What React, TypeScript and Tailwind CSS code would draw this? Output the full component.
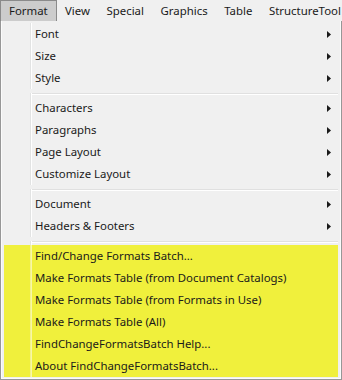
import React from 'react';

type Item = { label: string; sub?: boolean; hl?: boolean } | 'sep';

const items: Item[] = [
  { label: 'Font', sub: true },
  { label: 'Size', sub: true },
  { label: 'Style', sub: true },
  'sep',
  { label: 'Characters', sub: true },
  { label: 'Paragraphs', sub: true },
  { label: 'Page Layout', sub: true },
  { label: 'Customize Layout', sub: true },
  'sep',
  { label: 'Document', sub: true },
  { label: 'Headers & Footers', sub: true },
  'sep',
  { label: 'Find/Change Formats Batch...', hl: true },
  { label: 'Make Formats Table (from Document Catalogs)', hl: true },
  { label: 'Make Formats Table (from Formats in Use)', hl: true },
  { label: 'Make Formats Table (All)', hl: true },
  { label: 'FindChangeFormatsBatch Help...', hl: true },
  { label: 'About FindChangeFormatsBatch...', hl: true },
];

const menuBar = ['Format', 'View', 'Special', 'Graphics', 'Table', 'StructureTool'];

function Arrow() {
  return (
    <svg width="4" height="7" viewBox="0 0 4 7" className="shrink-0">
      <path d="M0 0 L4 3.5 L0 7 Z" fill="#1a1a1a" />
    </svg>
  );
}

export default function App() {
  return (
    <div
      className="w-[342px] h-[380px] overflow-hidden bg-[#f0f0f0] text-[11.4px] text-[#1a1a1a] flex flex-col"
      style={{ fontFamily: '"Segoe UI", "Noto Sans", sans-serif' }}
    >
      {/* menu bar */}
      <div className="h-[21px] flex items-stretch bg-[#f0f0f0] whitespace-nowrap shrink-0">
        {menuBar.map((m, i) => (
          <div
            key={m}
            className={
              i === 0
                ? 'px-[8px] flex items-center bg-[#cccccc] border border-[#8a8a8a] border-b-0'
                : 'px-[8.3px] flex items-center'
            }
          >
            {m}
          </div>
        ))}
      </div>

      {/* dropdown */}
      <div className="flex-1 border border-t-0 border-[#979797]">
        <div className="h-full border border-t-0 border-[#fbfbfb] px-[2px] pt-[2px] flex flex-col">
          {items.map((it, i) =>
            it === 'sep' ? (
              <div key={i} className="h-[8px] flex pt-[4px]">
                <div className="w-[26px]" />
                <div className="w-[1px] bg-[#e2e3e3]" />
                <div className="w-[1px] bg-white" />
                <div className="flex-1 flex flex-col">
                  <div className="h-[1px] bg-[#e0e0e0]" />
                  <div className="h-[1px] bg-white" />
                </div>
              </div>
            ) : (
              <div
                key={i}
                className={`h-[22px] flex items-center ${it.hl ? 'bg-[#f0f03c]' : ''}`}
              >
                <div className="w-[26px] self-stretch" />
                <div className={`w-[1px] self-stretch ${it.hl ? 'bg-[#f4f488]' : 'bg-[#e2e3e3]'}`} />
                <div className={`w-[1px] self-stretch ${it.hl ? 'bg-[#f7f7a8]' : 'bg-white'}`} />
                <span className="pl-[3px] flex-1 whitespace-nowrap">{it.label}</span>
                {it.sub && (
                  <div className="pr-[7px]">
                    <Arrow />
                  </div>
                )}
              </div>
            )
          )}
        </div>
      </div>
    </div>
  );
}
